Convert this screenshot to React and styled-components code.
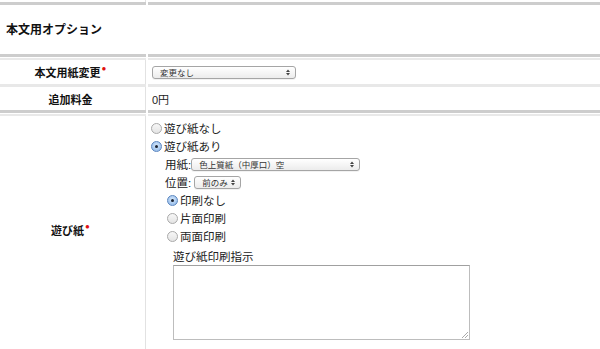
import React from 'react';
import styled, { createGlobalStyle } from 'styled-components';

const Global = createGlobalStyle`
  html, body { margin: 0; padding: 0; background: #fff; }
  body {
    font-family: "Liberation Sans", "Noto Sans CJK JP", sans-serif;
    color: #222;
    width: 600px;
    height: 349px;
    overflow: hidden;
  }
`;

/* row grid: label column + value column, split by a 2px gap */
const Row = styled.div`
  display: grid;
  grid-template-columns: 146px 1fr;
  column-gap: 2px;
`;

const RuleCell = styled.div`
  height: ${p => p.$h}px;
  background: ${p => p.$c};
`;

const Rule = ({ h, c }) => (
  <Row>
    <RuleCell $h={h} $c={c} />
    <RuleCell $h={h} $c={c} />
  </Row>
);

const SectionRule = () => (
  <>
    <Rule h={3} c="#cdcdcd" />
    <Rule h={1} c="#fff" />
    <Rule h={2} c="#e9e9e9" />
  </>
);

const Label = styled.div`
  height: ${p => p.$h}px;
  box-sizing: border-box;
  border-right: 1px solid #e2e2e2;
  display: flex;
  align-items: center;
  justify-content: center;
  padding-right: 4px;
  padding-bottom: ${p => p.$lift || 0}px;
  font-size: 11px;
  font-weight: bold;
  color: #111;
`;

const Value = styled.div`
  padding-left: 4px;
  display: flex;
  flex-direction: column;
  justify-content: center;
  font-size: 11px;
`;

const Req = styled.span`
  color: #e01010;
  font-size: 8px;
  position: relative;
  top: -4px;
  margin-left: 1px;
`;

const Heading = styled.div`
  height: 49px;
  box-sizing: border-box;
  padding: 0 0 2px 6px;
  display: flex;
  align-items: center;
  font-size: 12px;
  font-weight: bold;
  color: #111;
`;

const SelectBox = styled.div`
  width: ${p => p.$w}px;
  height: 13px;
  box-sizing: border-box;
  border: 1px solid #a5a5a5;
  border-radius: 3px;
  background: linear-gradient(#ffffff, #ececec);
  display: flex;
  align-items: center;
  justify-content: space-between;
  padding: 0 5px 0 7px;
  font-size: 8.5px;
  color: #333;
  box-shadow: 0 1px 0 rgba(0,0,0,0.05);
`;

const Arrows = () => (
  <svg width="4" height="7" viewBox="0 0 4 7">
    <path d="M0 3 L2 0.5 L4 3 Z M0 4 L2 6.5 L4 4 Z" fill="#444" />
  </svg>
);

const Select = ({ w, children }) => (
  <SelectBox $w={w}>
    <span>{children}</span>
    <Arrows />
  </SelectBox>
);

const Options = styled.div`
  padding: 3px 0 0 3px;
  display: flex;
  flex-direction: column;
  font-size: 11.5px;
  color: #222;
`;

const RadioLine = styled.div`
  display: flex;
  align-items: center;
  height: 18px;
  padding-left: ${p => p.$indent || 0}px;
`;

const Radio = styled.span`
  width: 11px;
  height: 11px;
  box-sizing: border-box;
  border-radius: 50%;
  margin-right: 2px;
  display: inline-flex;
  align-items: center;
  justify-content: center;
  border: 1px solid ${p => (p.$on ? '#5c87c0' : '#a9a9a9')};
  background: ${p => (p.$on ? 'radial-gradient(circle at 50% 40%, #d6e8fb, #87b2e6)' : 'linear-gradient(#f7f7f7, #e4e4e4)')};
  &::after {
    content: '';
    width: 3px;
    height: 3px;
    border-radius: 50%;
    background: ${p => (p.$on ? '#1a2333' : 'transparent')};
  }
`;

const FieldLine = styled.div`
  display: flex;
  align-items: center;
  height: 18px;
  padding-left: 14px;
  gap: ${p => p.$gap}px;
`;

const NoteLabel = styled.div`
  padding: 3px 0 0 22px;
  font-size: 11.5px;
  height: 16px;
`;

const TextArea = styled.div`
  margin: 1px 0 0 22px;
  width: 297px;
  height: 75px;
  box-sizing: border-box;
  border: 1px solid #bdbdbd;
  border-top-color: #a0a0a0;
  position: relative;
  &::after {
    content: '';
    position: absolute;
    right: 1px;
    bottom: 1px;
    width: 6px;
    height: 6px;
    background: linear-gradient(135deg, transparent 45%, #aaa 45%, #aaa 55%, transparent 55%, transparent 70%, #aaa 70%, #aaa 80%, transparent 80%);
  }
`;

export default function App() {
  return (
    <>
      <Global />
      <Row>
        <Label $h={2} />
        <div />
      </Row>
      <Rule h={3} c="#cdcdcd" />
      <Heading>本文用オプション</Heading>
      <SectionRule />
      <Row>
        <Label $h={24}>本文用紙変更<Req>●</Req></Label>
        <Value><Select w={144}>変更なし</Select></Value>
      </Row>
      <Rule h={3} c="#e8e8e8" />
      <Row>
        <Label $h={23}>追加料金</Label>
        <Value>0円</Value>
      </Row>
      <SectionRule />
      <Row>
        <Label $h={233} $lift={5}>遊び紙<Req>●</Req></Label>
        <Options>
          <RadioLine><Radio />遊び紙なし</RadioLine>
          <RadioLine><Radio $on />遊び紙あり</RadioLine>
          <FieldLine $gap={0}>用紙:<Select w={169}>色上質紙（中厚口）空</Select></FieldLine>
          <FieldLine $gap={3}>位置:<Select w={47}>前のみ</Select></FieldLine>
          <RadioLine $indent={16}><Radio $on />印刷なし</RadioLine>
          <RadioLine $indent={16}><Radio />片面印刷</RadioLine>
          <RadioLine $indent={16}><Radio />両面印刷</RadioLine>
          <NoteLabel>遊び紙印刷指示</NoteLabel>
          <TextArea />
        </Options>
      </Row>
    </>
  );
}
